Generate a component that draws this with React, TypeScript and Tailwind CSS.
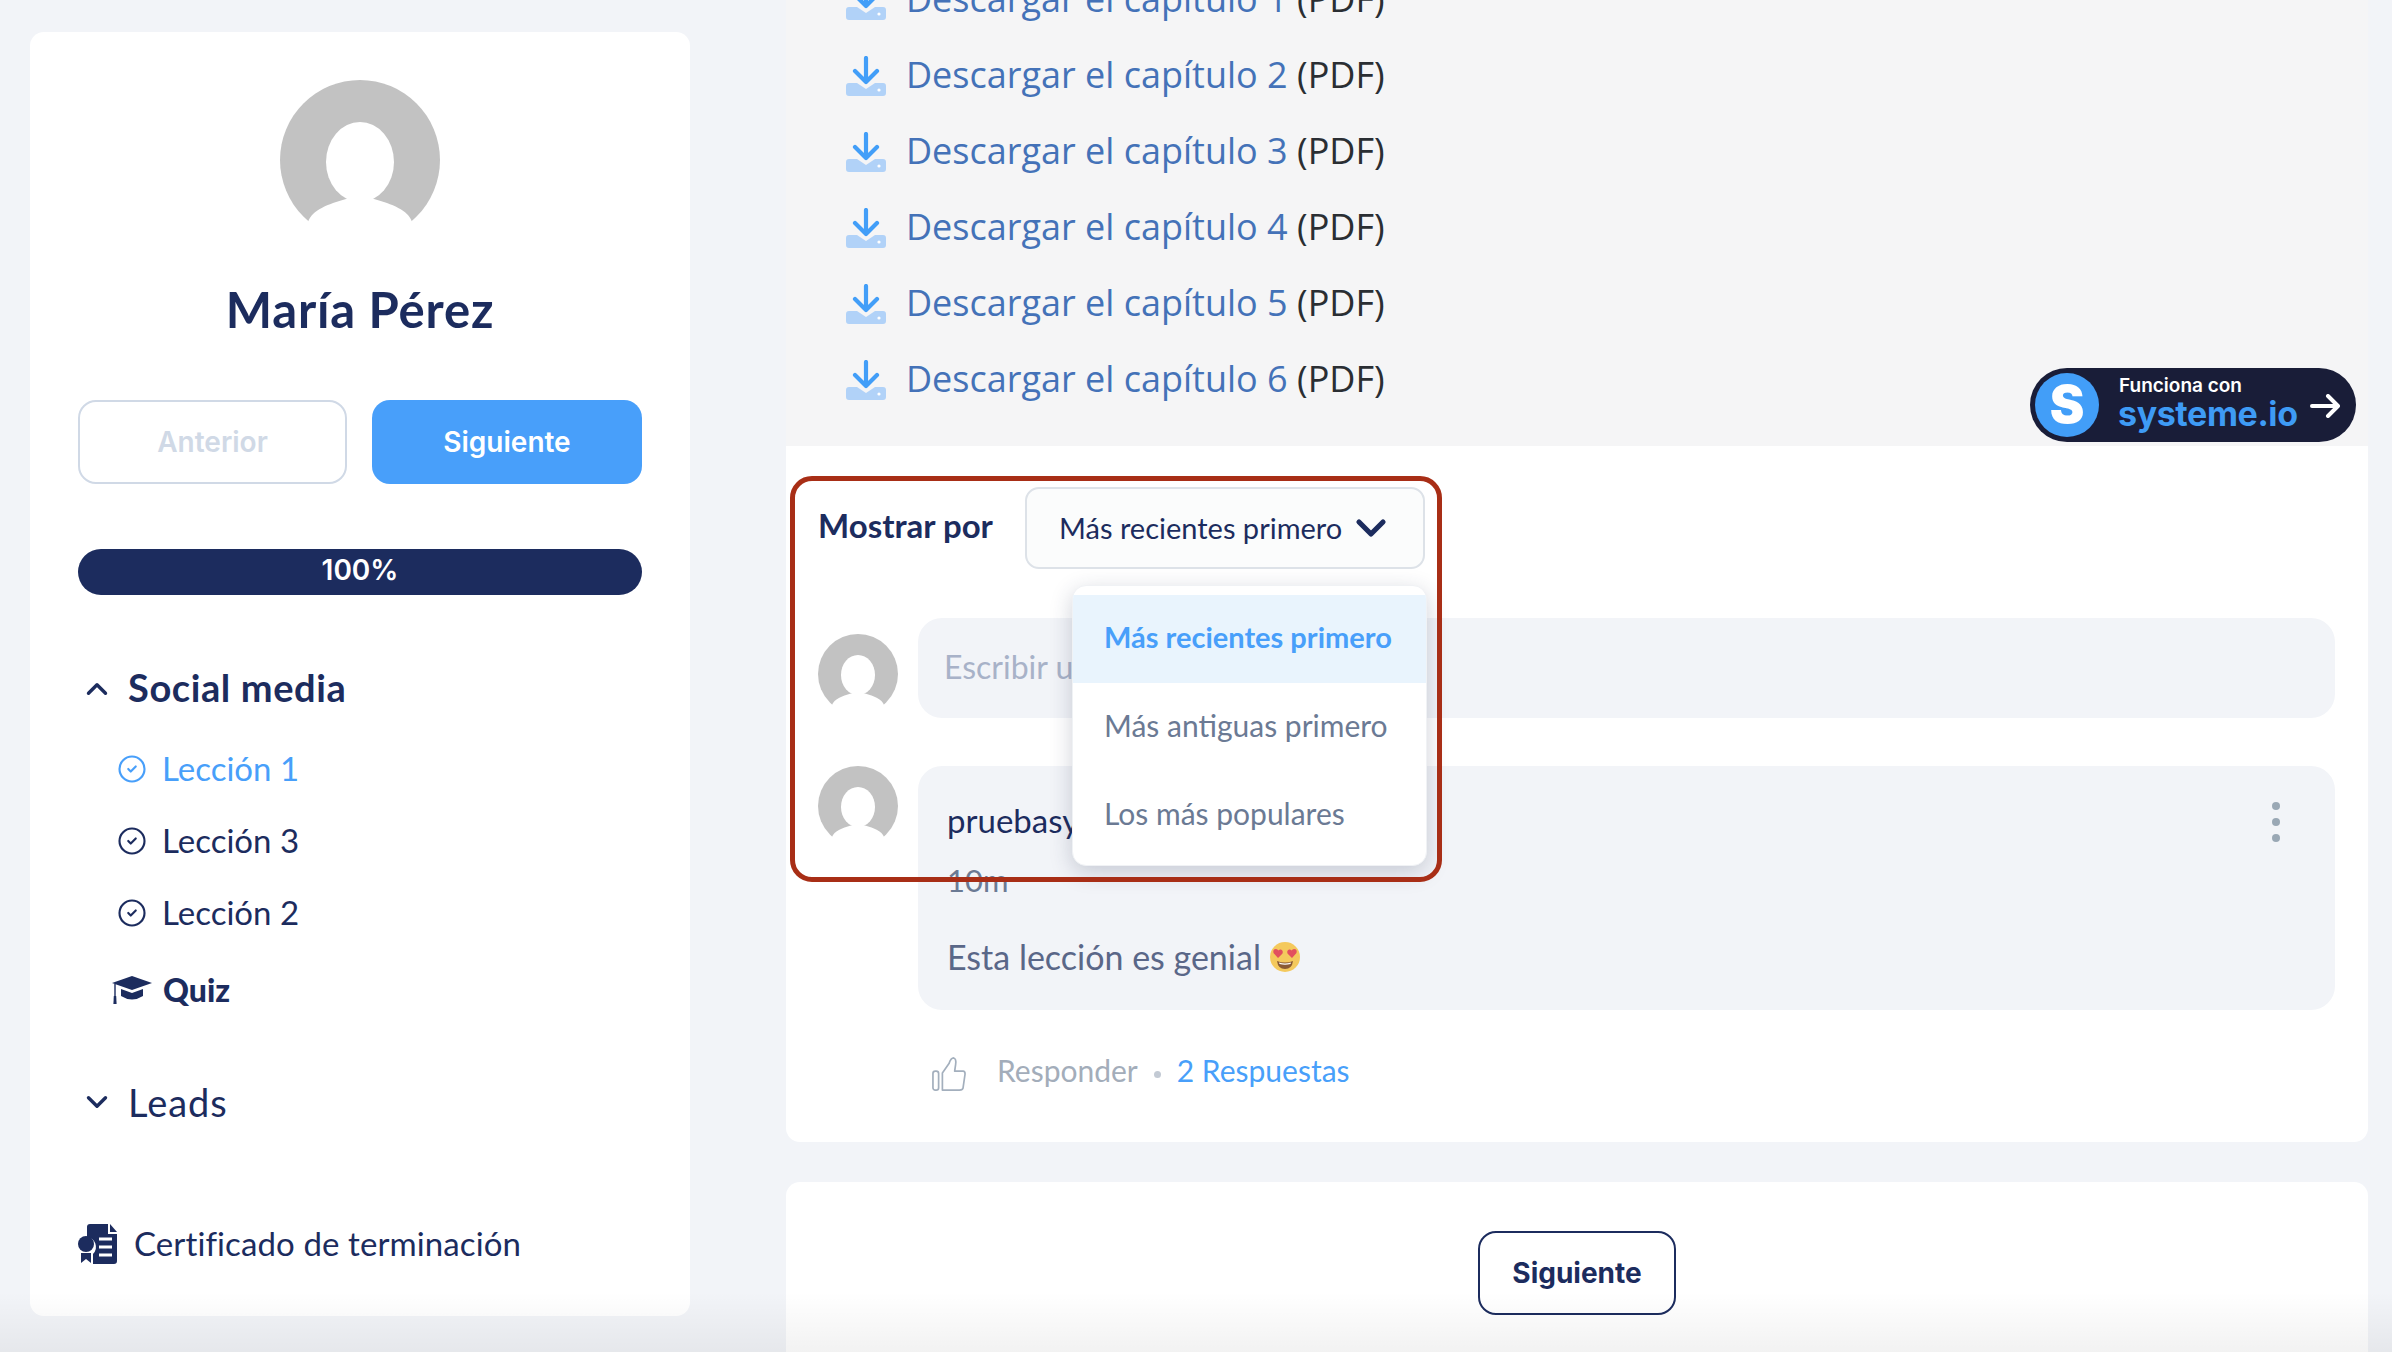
import { ChevronDown, ChevronUp, CircleCheck } from "lucide-react";

const chapters = [1, 2, 3, 4, 5, 6];

function Avatar({ className }: { className: string }) {
  return (
    <svg viewBox="0 0 160 142" className={className}>
      <circle cx="80" cy="80" r="80" fill="#c2c2c2" />
      <ellipse cx="80" cy="82" rx="34" ry="40" fill="#fff" />
      <path d="M28 142C32 130 48 124 66 119L94 119C112 124 128 130 132 142Z" fill="#fff" />
    </svg>
  );
}

function DownloadIcon() {
  return (
    <svg viewBox="0 0 40 40" className="w-10 h-10 shrink-0">
      <path d="M3 27H11L20 33L29 27H37Q40 27 40 30V37Q40 40 37 40H3Q0 40 0 37V30Q0 27 3 27Z" fill="#b1d2f8" />
      <circle cx="33" cy="34" r="1.6" fill="#fff" />
      <path d="M20 2V24M9 15L20 26L31 15" fill="none" stroke="#429ef8" strokeWidth="4.2" strokeLinecap="round" strokeLinejoin="round" />
    </svg>
  );
}

function GradCap() {
  return (
    <svg viewBox="0 0 40 28" className="w-10 h-7 shrink-0">
      <path d="M20 0L40 7L20 14L0 7Z" fill="#1c2c5e" />
      <path d="M9 13L20 17L31 13V20Q20 27 9 20Z" fill="#1c2c5e" />
      <path d="M3 8V21" stroke="#1c2c5e" strokeWidth="1.4" />
      <path d="M1.8 20H4.2L4.6 28H1.4Z" fill="#1c2c5e" />
    </svg>
  );
}

function CertIcon() {
  return (
    <svg viewBox="0 0 40 40" className="w-10 h-10 shrink-0">
      <path d="M12 0H30V10H39V37Q39 40 36 40H15V30A10 10 0 0 0 9 13V3Q9 0 12 0Z" fill="#1c2c5e" />
      <path d="M32 0L39 8H32Z" fill="#1c2c5e" />
      <circle cx="8" cy="20" r="8" fill="#1c2c5e" />
      <path d="M3 29H13V39L8 35L3 39Z" fill="#1c2c5e" />
      <path d="M21 15H34M21 23H34M21 31H34" stroke="#fff" strokeWidth="3" />
    </svg>
  );
}

function ThumbIcon() {
  return (
    <svg viewBox="0 0 36 36" className="w-[34px] h-[34px] shrink-0" fill="none" stroke="#a3afbd" strokeWidth="1.8" strokeLinejoin="round">
      <rect x="1" y="15" width="6" height="20" rx="2.5" />
      <path d="M11 35V17L18 7Q20 1 23 1Q26 2 25 8L24 15H33Q35 15 35 18L33 32Q33 35 29 35Z" />
    </svg>
  );
}

function HeartEyes() {
  return (
    <svg viewBox="0 0 30 30" className="w-[30px] h-[30px] shrink-0">
      <circle cx="15" cy="15" r="15" fill="#f4c95d" />
      <path d="M7 19Q15 22 23 19Q22 27 15 27Q8 27 7 19Z" fill="#8a5a34" />
      <path d="M9 20.500Q15 22.500 21 20.500L20.500 22Q15 23.500 9.500 22Z" fill="#fff" />
      <path d="M8 16L3.500 11Q2.500 7 6 7Q7.500 7 8.500 8.500Q9.500 7 11 7.500Q13.500 8.500 12.500 11.500Z" fill="#e2505f" />
      <path d="M22 16L26.500 11Q27.500 7 24 7Q22.500 7 21.500 8.500Q20.500 7 19 7.500Q16.500 8.500 17.500 11.500Z" fill="#e2505f" />
    </svg>
  );
}

function LessonRow({ label, active }: { label: string; active?: boolean }) {
  return (
    <div className={`flex items-center h-[72px] ml-10 gap-[15px] text-[33px] ${active ? "text-[#489ffa]" : "text-[#1c2c5e]"}`}>
      <CircleCheck size={30} strokeWidth={1.7} className="shrink-0 -ml-px" />
      <span>{label}</span>
    </div>
  );
}

export default function App() {
  return (
    <div className="relative flex h-[1352px] overflow-hidden bg-[#f2f4f8] font-['Lato',sans-serif] text-[#1c2c5e]">
      <aside className="w-[660px] h-[1284px] ml-[30px] mt-[32px] shrink-0 bg-white rounded-[14px] px-[48px] pt-[48px]">
        <Avatar className="w-40 h-[142px] mx-auto" />
        <h1 className="mt-[61px] text-[49px] leading-[52px] font-bold tracking-[0.8px] text-center">María Pérez</h1>
        <div className="flex gap-[25px] mt-[65px] font-['Inter',sans-serif] text-[28px] font-semibold">
          <button className="w-[269px] h-[84px] rounded-[18px] border-2 border-[#d0d9e6] text-[#d0d9e6]">Anterior</button>
          <button className="w-[270px] h-[84px] rounded-[18px] bg-[#489ffa] text-white">Siguiente</button>
        </div>
        <div className="mt-[65px] h-[46px] rounded-full bg-[#1c2c5e] text-white text-center font-['Inter',sans-serif] text-[28px] font-semibold leading-[42px]">100%</div>

        <div className="flex items-center mt-[70px] h-11 gap-[14px] text-[38px] font-bold tracking-[0.6px]">
          <ChevronUp size={34} strokeWidth={2.4} className="ml-[2px] mt-1" />
          <span>Social media</span>
        </div>
        <div className="mt-[24px]">
          <LessonRow label="Lección 1" active />
          <LessonRow label="Lección 3" />
          <LessonRow label="Lección 2" />
          <div className="flex items-center h-[72px] mt-[5px] ml-[34px] gap-[11px] text-[32px] font-black">
            <GradCap />
            <span>Quiz</span>
          </div>
        </div>
        <div className="flex items-center mt-[54px] h-11 gap-[14px] text-[38px] tracking-[1px]">
          <ChevronDown size={34} strokeWidth={2.4} className="ml-[2px]" />
          <span>Leads</span>
        </div>
        <div className="flex items-center mt-[98px] h-11 gap-4 text-[33px] tracking-[0.1px]">
          <CertIcon />
          <span>Certificado de terminación</span>
        </div>
      </aside>

      <main className="w-[1582px] ml-[96px] shrink-0">
        <section className="bg-[#f5f5f6] -mt-[38px] pb-[28px] pl-[60px] font-['Open_Sans',sans-serif] text-[36px]">
          {chapters.map((n) => (
            <div key={n} className="flex items-center h-[76px] gap-5">
              <DownloadIcon />
              <p className="text-[#2a2e33] -mt-[2px]">
                <span className="text-[#4472b8]">Descargar el capítulo {n}</span> (PDF)
              </p>
            </div>
          ))}
        </section>

        <section className="relative bg-white rounded-b-[14px] pl-8 pr-[33px] pt-[41px] pb-[51px]">
          <div className="flex items-center">
            <span className="w-[207px] text-[33px] font-bold -mt-[4px]">Mostrar por</span>
            <div className="flex items-center justify-between w-[400px] h-[82px] pl-[32px] pr-[28px] rounded-[14px] border-2 border-[#dde2e8] bg-[#fbfcfc] text-[29px]">
              <span>Más recientes primero</span>
              <ChevronDown size={48} strokeWidth={2.6} />
            </div>
          </div>

          <div className="flex mt-[49px] gap-5">
            <Avatar className="w-20 h-[71px] mt-4 shrink-0" />
            <div className="flex-1 h-[100px] rounded-[24px] bg-[#f2f4f8] pl-[26px] pt-[29px] text-[32px] leading-[40px] text-[#a8b2c8]">Escribir un comentario</div>
          </div>

          <div className="flex mt-[48px] gap-5">
            <Avatar className="w-20 h-[71px] shrink-0" />
            <div className="relative flex-1 h-[244px] rounded-[24px] bg-[#f2f4f8] pl-[29px] pt-[37px] leading-[34px]">
              <p className="text-[33px]">pruebasystemeio</p>
              <p className="mt-[26px] text-[31px] text-[#6b7a94]">10m</p>
              <div className="flex items-center mt-[43px] gap-[9px] text-[#5a6788]">
                <span className="text-[34px]">Esta lección es genial</span>
                <HeartEyes />
              </div>
              <div className="absolute right-[55px] top-9 flex flex-col gap-2">
                <span className="w-2 h-2 rounded-full bg-[#9aa8b5]" />
                <span className="w-2 h-2 rounded-full bg-[#9aa8b5]" />
                <span className="w-2 h-2 rounded-full bg-[#9aa8b5]" />
              </div>
            </div>
          </div>

          <div className="flex items-center h-[34px] mt-[47px] ml-[114px] text-[30px]">
            <ThumbIcon />
            <span className="ml-[31px] -mt-2 text-[#a3adba]">Responder</span>
            <span className="w-[7px] h-[7px] ml-4 rounded-full bg-[#c3cad4]" />
            <span className="ml-4 -mt-2 text-[#489ffa]">2 Respuestas</span>
          </div>

          <div className="absolute left-[286px] top-[139px] z-10 w-[355px] h-[281px] pt-[9px] rounded-[14px] bg-white border border-[#f0f2f5] shadow-[0_6px_22px_rgba(40,50,80,0.22)] text-[30px] text-[#6b7a94] overflow-hidden">
            <div className="flex items-center h-[88px] pl-[31px] pb-1 bg-[#e9f4fd] text-[29px] text-[#489ffa] font-bold">Más recientes primero</div>
            <div className="flex items-center h-[88px] pl-[31px] pb-[3px]">Más antiguas primero</div>
            <div className="flex items-center h-[88px] pl-[31px] pb-[3px]">Los más populares</div>
          </div>
          <div className="absolute left-1 top-[30px] z-20 w-[652px] h-[406px] rounded-[22px] border-[5px] border-[#a82e16] pointer-events-none" />
        </section>

        <section className="mt-10 bg-white rounded-t-[14px] flex justify-center pt-[49px] pb-10">
          <button className="w-[198px] h-[84px] rounded-[18px] border-2 border-[#1c2c5e] bg-white font-['Inter',sans-serif] text-[28px] font-bold">Siguiente</button>
        </section>
      </main>

      <div className="absolute top-[368px] right-[36px] z-30 flex items-center w-[326px] h-[74px] pl-[5px] rounded-full bg-[#191d38] font-['Inter',sans-serif]">
        <div className="flex items-center justify-center w-16 h-16 rounded-full bg-[#429ef8] text-white text-[52px] font-black">S</div>
        <div className="ml-[19px] -mt-1 flex flex-col">
          <span className="ml-px text-[19px] leading-[22px] font-semibold text-white">Funciona con</span>
          <span className="text-[34px] leading-[34px] font-bold text-[#3e9bf5] tracking-[-0.4px]">systeme.io</span>
        </div>
        <svg viewBox="0 0 30 24" className="absolute left-[280px] top-[26px] w-[30px] h-6" fill="none" stroke="#fff" strokeWidth="4" strokeLinecap="round" strokeLinejoin="round">
          <path d="M2 12H27M18 2L28 12L18 22" />
        </svg>
      </div>

      <div className="absolute left-0 right-0 bottom-0 h-[60px] z-40 pointer-events-none bg-gradient-to-b from-transparent to-[rgba(0,0,0,0.05)]" />
    </div>
  );
}
